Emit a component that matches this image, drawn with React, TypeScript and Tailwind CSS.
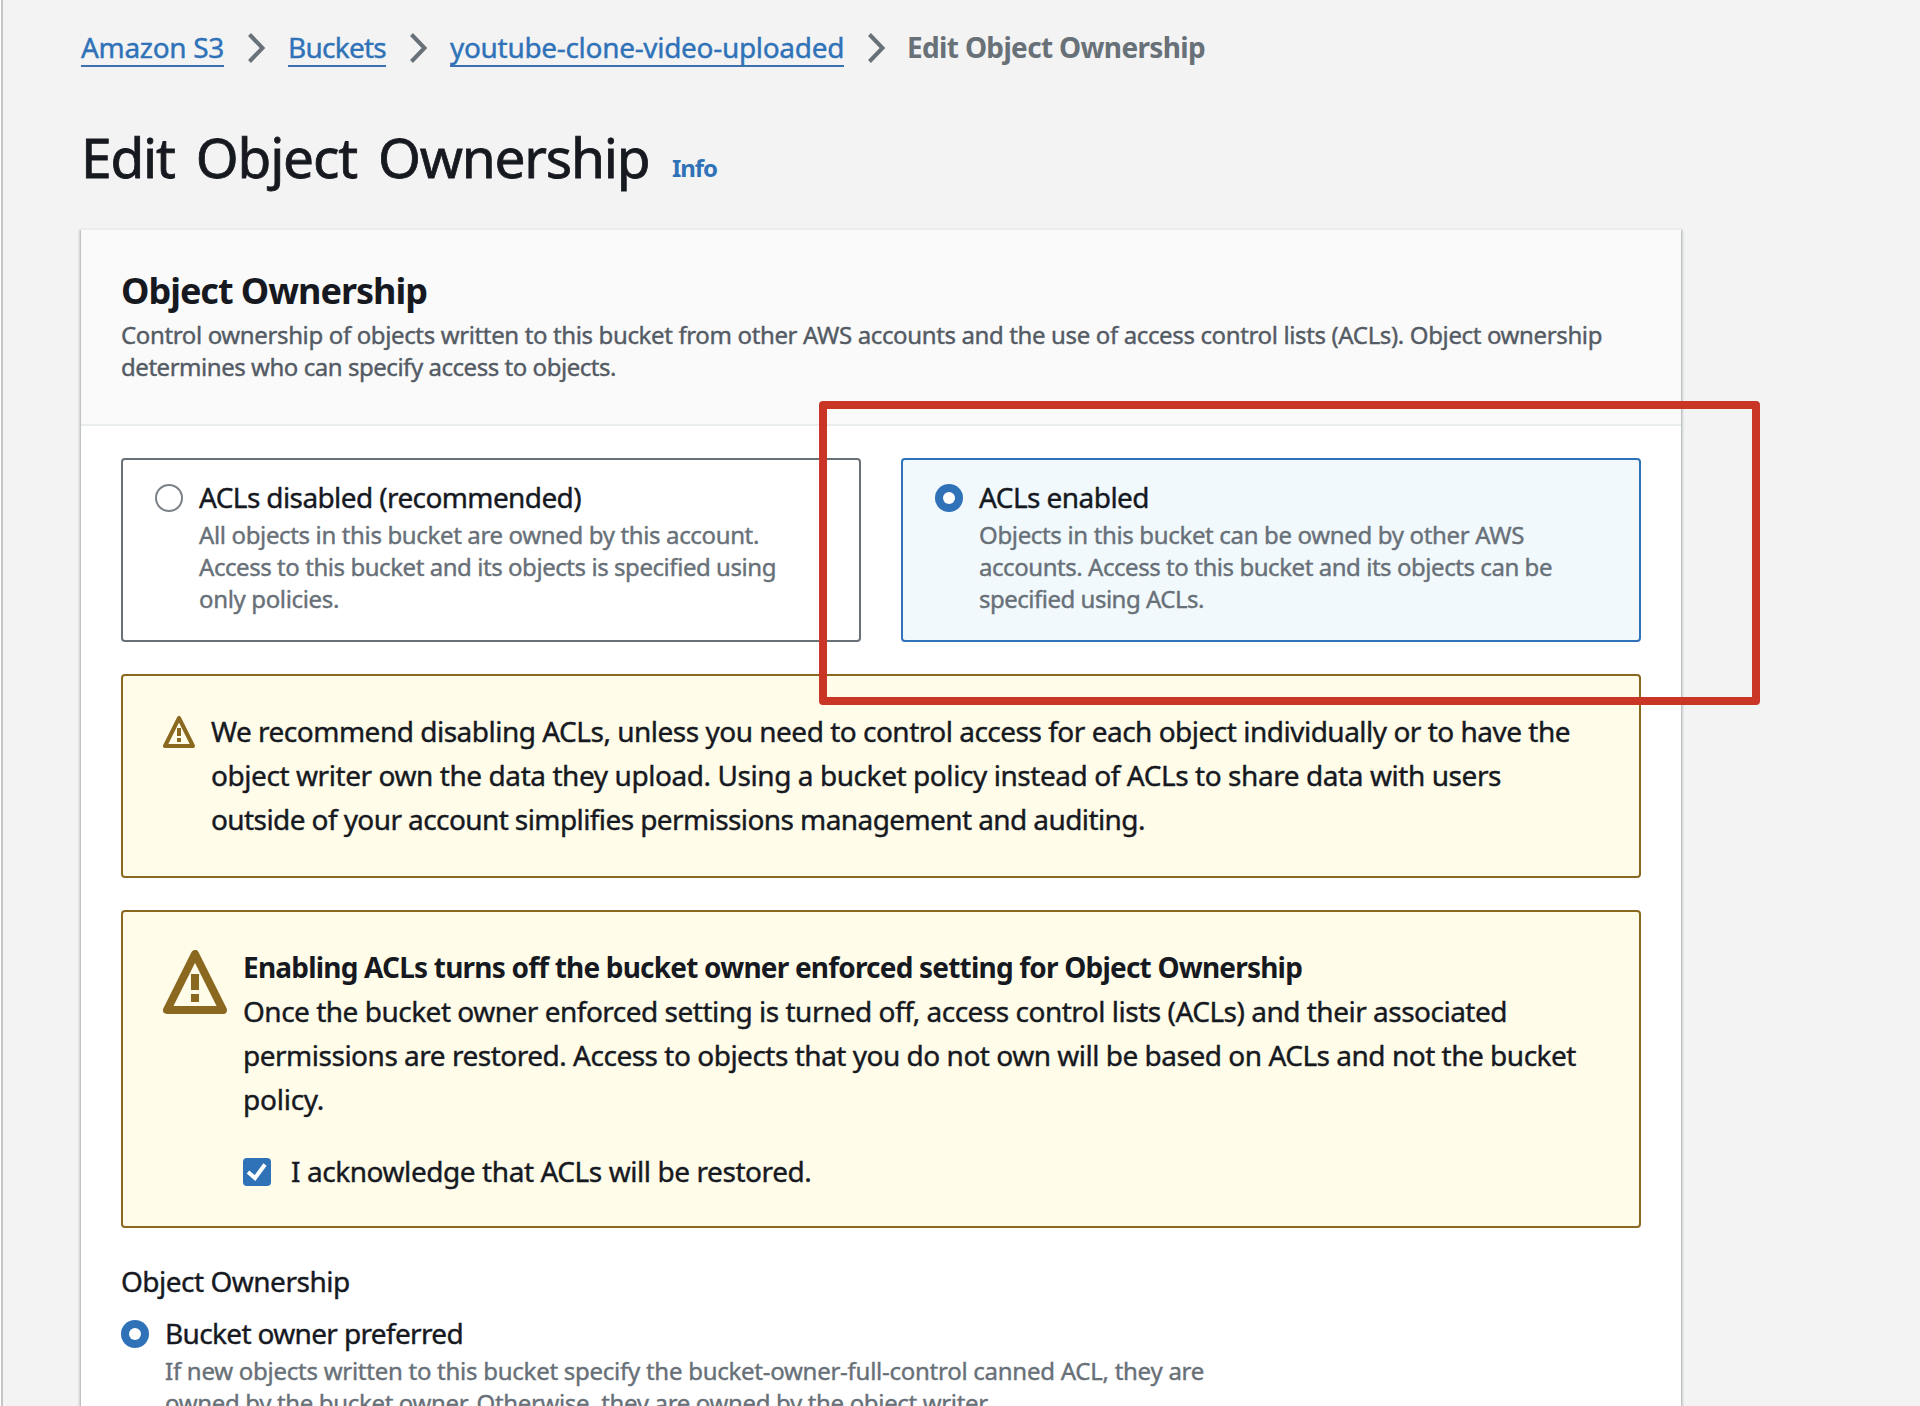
import type { ReactNode } from "react";

function Chevron() {
  return (
    <svg viewBox="0 0 20 32" className="h-8 w-5 shrink-0" fill="none" stroke="#687078" strokeWidth="4">
      <path d="M2.5 3.5 15.5 17 2.5 30.5" />
    </svg>
  );
}

function Crumb({ children, className }: { children: ReactNode; className: string }) {
  return (
    <a className={`block h-9 border-b-2 border-[#3b72ad] leading-8 whitespace-nowrap text-[#2f72b8] ${className}`}>
      {children}
    </a>
  );
}

function WarningIcon({ className }: { className: string }) {
  return (
    <svg viewBox="0 0 16 16" className={`shrink-0 ${className}`} fill="none" stroke="#8a6820" strokeWidth="2">
      <path d="M8 1 1 15h14L8 1z" strokeLinejoin="round" />
      <path d="M8 6v4M8 11v2" />
    </svg>
  );
}

function Radio({ checked }: { checked?: boolean }) {
  return checked ? (
    <span className="flex size-7 shrink-0 items-center justify-center rounded-full bg-[#2f72b8]">
      <span className="size-3 rounded-full bg-white" />
    </span>
  ) : (
    <span className="block size-7 shrink-0 rounded-full border-2 border-[#7b8187] bg-white" />
  );
}

function Line({ children, className }: { children: ReactNode; className: string }) {
  return <div className={`whitespace-nowrap ${className}`}>{children}</div>;
}

export default function App() {
  return (
    <div className="relative flex h-[1406px] w-[1920px] overflow-hidden bg-[#f3f3f3] font-['Noto_Sans','Open_Sans',sans-serif] text-[28px] text-[#16191f] [-webkit-text-stroke:0.4px]">
      <div className="h-full w-[3px] shrink-0 border-r-2 border-[#c3c6c8] bg-white" />
      <main className="ml-[78px] w-[1600px] shrink-0">
        <nav className="mt-[31px] flex h-9">
          <Crumb className="w-[143px] tracking-[-0.32px]">Amazon S3</Crumb>
          <span className="ml-[23px] w-[41px]"><Chevron /></span>
          <Crumb className="w-[98px] tracking-[-0.74px]">Buckets</Crumb>
          <span className="ml-[23px] w-[41px]"><Chevron /></span>
          <Crumb className="w-[394px] tracking-[-0.31px]">youtube-clone-video-uploaded</Crumb>
          <span className="ml-[23px] w-10"><Chevron /></span>
          <span className="leading-8 font-bold tracking-[-0.66px] whitespace-nowrap text-[#687078] [-webkit-text-stroke:0]">
            Edit Object Ownership
          </span>
        </nav>

        <div className="mt-[58px] flex items-baseline">
          <h1 className="w-[591px] text-[55px] leading-[64px] tracking-[-1.2px] whitespace-nowrap [word-spacing:8px] [-webkit-text-stroke:0.8px]">
            Edit Object Ownership
          </h1>
          <a className="relative -top-px text-2xl font-bold tracking-[-1.06px] text-[#2f72b8] [-webkit-text-stroke:0]">Info</a>
        </div>

        <section className="mt-[39px] h-[1300px] border-t-2 border-[#eaeded] bg-white shadow-[0_2px_2px_0_rgba(0,28,36,0.3),2px_2px_2px_0_rgba(0,28,36,0.15),-2px_2px_2px_0_rgba(0,28,36,0.15)]">
          <header className="h-[196px] border-b-2 border-[#eaeded] bg-[#fafafa] px-10 pt-[39px]">
            <h2 className="text-4xl leading-[44px] font-bold tracking-[-1.02px] [-webkit-text-stroke:0]">Object Ownership</h2>
            <div className="mt-1.5 text-2xl leading-8 text-[#545b64]">
              <Line className="tracking-[-0.364px]">
                Control ownership of objects written to this bucket from other AWS accounts and the use of access control lists (ACLs). Object ownership
              </Line>
              <Line className="tracking-[-0.46px]">determines who can specify access to objects.</Line>
            </div>
          </header>

          <div className="px-10 pt-8">
            <div className="grid grid-cols-2 gap-10">
              <label className="flex h-[184px] rounded border-2 border-[#687078] bg-white pt-[21px] pl-8">
                <span className="mt-[3px] mr-4"><Radio /></span>
                <div>
                  <Line className="leading-8 tracking-[-0.606px]">ACLs disabled (recommended)</Line>
                  <div className="mt-1.5 text-2xl leading-8 text-[#687078]">
                    <Line className="tracking-[-0.356px]">All objects in this bucket are owned by this account.</Line>
                    <Line className="tracking-[-0.441px]">Access to this bucket and its objects is specified using</Line>
                    <Line className="tracking-[-0.347px]">only policies.</Line>
                  </div>
                </div>
              </label>
              <label className="flex h-[184px] rounded border-2 border-[#2f72b8] bg-[#f1f9fd] pt-[21px] pl-8">
                <span className="mt-[3px] mr-4"><Radio checked /></span>
                <div>
                  <Line className="leading-8 tracking-[-0.554px]">ACLs enabled</Line>
                  <div className="mt-1.5 text-2xl leading-8 text-[#687078]">
                    <Line className="tracking-[-0.342px]">Objects in this bucket can be owned by other AWS</Line>
                    <Line className="tracking-[-0.445px]">accounts. Access to this bucket and its objects can be</Line>
                    <Line className="tracking-[-0.494px]">specified using ACLs.</Line>
                  </div>
                </div>
              </label>
            </div>

            <div className="mt-8 flex h-[204px] rounded border-2 border-[#8a6820] bg-[#fffce9] pt-[33px] pl-10">
              <WarningIcon className="mt-[7px] mr-4 size-8" />
              <div className="leading-[44px]">
                <Line className="tracking-[-0.498px]">
                  We recommend disabling ACLs, unless you need to control access for each object individually or to have the
                </Line>
                <Line className="tracking-[-0.429px]">
                  object writer own the data they upload. Using a bucket policy instead of ACLs to share data with users
                </Line>
                <Line className="tracking-[-0.59px]">outside of your account simplifies permissions management and auditing.</Line>
              </div>
            </div>

            <div className="mt-8 flex h-[318px] rounded border-2 border-[#8a6820] bg-[#fffce9] pt-[33px] pl-10">
              <WarningIcon className="mt-[5px] mr-4 size-16" />
              <div className="leading-[44px]">
                <Line className="font-bold tracking-[-0.8px] [-webkit-text-stroke:0]">
                  Enabling ACLs turns off the bucket owner enforced setting for Object Ownership
                </Line>
                <Line className="tracking-[-0.497px]">
                  Once the bucket owner enforced setting is turned off, access control lists (ACLs) and their associated
                </Line>
                <Line className="tracking-[-0.489px]">
                  permissions are restored. Access to objects that you do not own will be based on ACLs and not the bucket
                </Line>
                <Line className="tracking-[-0.245px]">policy.</Line>
                <label className="mt-[34px] flex gap-5 leading-8">
                  <span className="mt-[3px] size-7 shrink-0 rounded bg-[#2f72b8]">
                    <svg viewBox="0 0 28 28" className="size-7" fill="none" stroke="#fff" strokeWidth="4">
                      <path d="M5 14 12 20 22 6.5" />
                    </svg>
                  </span>
                  <Line className="tracking-[-0.43px]">I acknowledge that ACLs will be restored.</Line>
                </label>
              </div>
            </div>

            <Line className="mt-[37px] leading-8 tracking-[-0.5px]">Object Ownership</Line>
            <label className="mt-5 flex">
              <span className="mt-[3px] mr-4"><Radio checked /></span>
              <div>
                <Line className="leading-8 tracking-[-0.656px]">Bucket owner preferred</Line>
                <div className="mt-1.5 text-2xl leading-8 text-[#687078]">
                  <Line className="tracking-[-0.26px]">
                    If new objects written to this bucket specify the bucket-owner-full-control canned ACL, they are
                  </Line>
                  <Line className="tracking-[-0.341px]">
                    owned by the bucket owner. Otherwise, they are owned by the object writer.
                  </Line>
                </div>
              </div>
            </label>
          </div>
        </section>
      </main>

      {/* Highlight frame drawn over the ACL options */}
      <div className="absolute top-[401px] left-[819px] h-[304px] w-[941px] rounded-[4px] border-8 border-[#c93625]" />
    </div>
  );
}
